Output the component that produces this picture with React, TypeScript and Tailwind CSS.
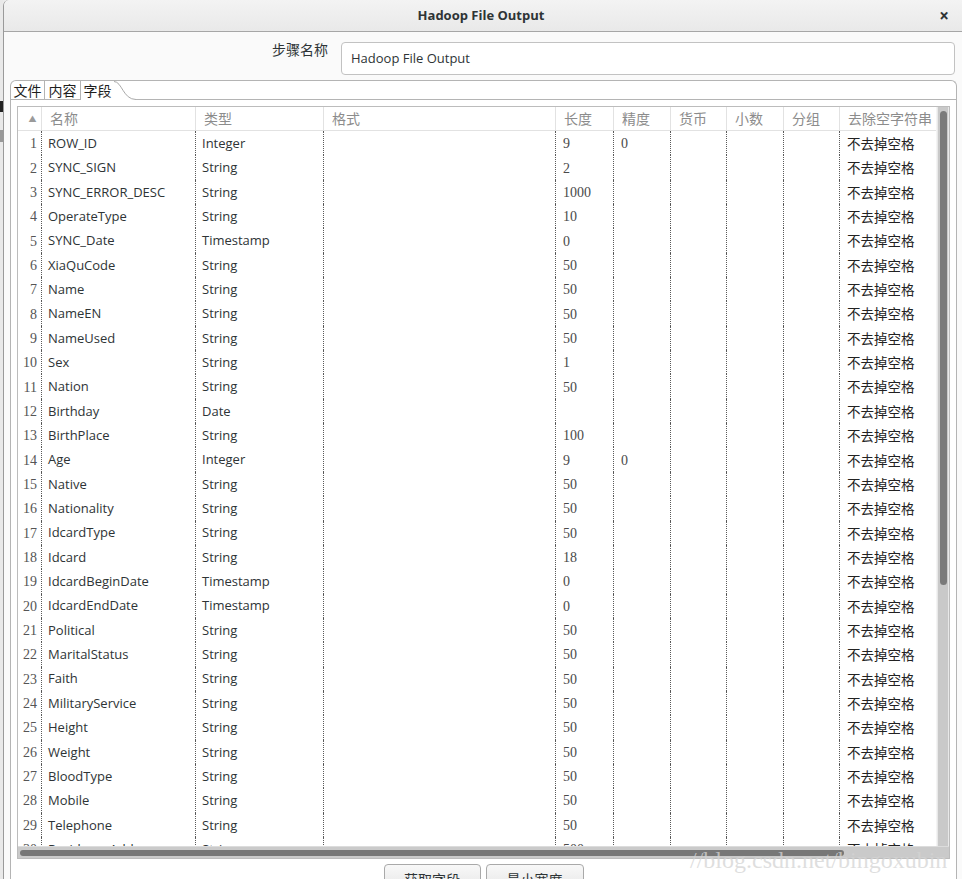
import React from "react";

const cols = [
  { w: "w-[24px]", label: "" },
  { w: "w-[154px]", label: "名称" },
  { w: "w-[128px]", label: "类型" },
  { w: "w-[232px]", label: "格式" },
  { w: "w-[58px]", label: "长度" },
  { w: "w-[57px]", label: "精度" },
  { w: "w-[56px]", label: "货币" },
  { w: "w-[57px]", label: "小数" },
  { w: "w-[56px]", label: "分组" },
  { w: "w-[96px]", label: "去除空字符串" },
];

const rows: [string, string, string, string][] = [
  ["ROW_ID", "Integer", "9", "0"],
  ["SYNC_SIGN", "String", "2", ""],
  ["SYNC_ERROR_DESC", "String", "1000", ""],
  ["OperateType", "String", "10", ""],
  ["SYNC_Date", "Timestamp", "0", ""],
  ["XiaQuCode", "String", "50", ""],
  ["Name", "String", "50", ""],
  ["NameEN", "String", "50", ""],
  ["NameUsed", "String", "50", ""],
  ["Sex", "String", "1", ""],
  ["Nation", "String", "50", ""],
  ["Birthday", "Date", "", ""],
  ["BirthPlace", "String", "100", ""],
  ["Age", "Integer", "9", "0"],
  ["Native", "String", "50", ""],
  ["Nationality", "String", "50", ""],
  ["IdcardType", "String", "50", ""],
  ["Idcard", "String", "18", ""],
  ["IdcardBeginDate", "Timestamp", "0", ""],
  ["IdcardEndDate", "Timestamp", "0", ""],
  ["Political", "String", "50", ""],
  ["MaritalStatus", "String", "50", ""],
  ["Faith", "String", "50", ""],
  ["MilitaryService", "String", "50", ""],
  ["Height", "String", "50", ""],
  ["Weight", "String", "50", ""],
  ["BloodType", "String", "50", ""],
  ["Mobile", "String", "50", ""],
  ["Telephone", "String", "50", ""],
  ["ResidenceAddr", "String", "500", ""],
];

const sans = "font-['Open_Sans','Noto_Sans_CJK_SC',sans-serif]";
const cjk = "font-['Noto_Sans_CJK_SC',sans-serif]";
const serif = "font-['Liberation_Serif',serif]";
const dot = "border-r border-dotted border-[#5a5a5a]";

function FieldRow({ i, r }: { i: number; r: [string, string, string, string] }) {
  return (
    <div className="flex h-[24.35px] shrink-0 items-center text-[13px]">
      <div className={`w-[24px] h-full flex items-center justify-end pr-[4px] pt-[1px] ${dot} ${serif} text-[14px] text-[#555]`}>
        {i + 1}
      </div>
      <div className={`w-[154px] h-full flex items-center pl-[6px] pt-[1px] ${dot} ${sans} text-[#2e3436]`}>{r[0]}</div>
      <div className={`w-[128px] h-full flex items-center pl-[6px] pt-[1px] ${dot} ${sans} text-[#2e3436]`}>{r[1]}</div>
      <div className={`w-[232px] h-full ${dot}`}></div>
      <div className={`w-[58px] h-full flex items-center pl-[7px] pt-[1px] ${dot} ${serif} text-[14px] text-[#4a4a4a]`}>{r[2]}</div>
      <div className={`w-[57px] h-full flex items-center pl-[7px] pt-[1px] ${dot} ${serif} text-[14px] text-[#4a4a4a]`}>{r[3]}</div>
      <div className={`w-[56px] h-full ${dot}`}></div>
      <div className={`w-[57px] h-full ${dot}`}></div>
      <div className={`w-[56px] h-full ${dot}`}></div>
      <div className={`w-[96px] h-full flex items-center pl-[7px] ${cjk} text-[13.5px] text-[#222] whitespace-nowrap overflow-hidden`}>
        不去掉空格
      </div>
    </div>
  );
}

export default function App() {
  return (
    <div className={`relative w-[962px] h-[879px] overflow-hidden flex bg-[#ececec] ${sans}`}>
      <div className="w-[3px] shrink-0 flex flex-col bg-[#e9e9e9]">
        <div className="mt-[101px] h-[11px] bg-[#222]"></div>
        <div className="mt-[18px] h-[12px] bg-[#999]"></div>
      </div>

      <div className="flex-1 flex flex-col border-l border-[#9a9a9a] rounded-tl-[6px] bg-[#fafafa]">
        {/* title bar */}
        <div className="h-[32px] shrink-0 flex items-center bg-gradient-to-b from-[#f3f3f3] to-[#e9e9e9] border-b border-[#a6a6a6] rounded-tl-[6px]">
          <div className="flex-1 pl-[32px] text-center text-[13px] font-bold text-[#2e3436]">Hadoop File Output</div>
          <div className="w-[36px] pr-[13px] text-right text-[17px] leading-[17px] font-bold text-[#2e3436]">×</div>
        </div>

        {/* step name */}
        <div className="h-[48px] shrink-0 flex items-start pt-[10px]">
          <div className={`w-[324px] text-right text-[14px] leading-[14px] text-[#2e3436] ${cjk}`}>步骤名称</div>
          <div className="ml-[13px] w-[614px] h-[33px] flex items-center pl-[9px] bg-white border border-[#c2c2c2] rounded-[4px] text-[13px] text-[#2e3436]">
            Hadoop File Output
          </div>
        </div>

        {/* tab folder */}
        <div className="ml-[6px] w-[947px] flex-1 flex flex-col bg-white border border-[#b4b4b4] border-b-0 rounded-t-[6px]">
          <div className={`h-[19px] shrink-0 flex items-stretch ${cjk} text-[14px] leading-[17px] text-[#1e1e1e]`}>
            <div className="w-[34px] flex items-center justify-center border-r border-b border-[#b4b4b4]">文件</div>
            <div className="w-[36px] flex items-center justify-center border-r border-b border-[#b4b4b4]">内容</div>
            <div className="w-[33px] flex items-center justify-center">字段</div>
            <svg width="22" height="19" viewBox="0 0 22 19" className="shrink-0">
              <path d="M0 0.5 C8 0.5 9 18.5 22 18.5" fill="none" stroke="#a8a8a8" strokeWidth="1" />
            </svg>
            <div className="flex-1 border-b border-[#b4b4b4]"></div>
          </div>

          <div className="pt-[6px] px-[6px] flex flex-col">
            {/* table */}
            <div className="w-[933px] flex flex-col bg-white border border-[#bcbcbc]">
              <div className="flex">
                <div className="w-[918px] flex flex-col">
                  <div className={`h-[24px] flex border-b border-[#e2e2e2] ${cjk} text-[14px] text-[#8c8c8c]`}>
                    {cols.map((c, idx) => (
                      <div
                        key={idx}
                        className={`${c.w} h-full flex items-center whitespace-nowrap overflow-hidden ${
                          idx === 0
                            ? "justify-center border-r border-[#e2e2e2] text-[8px] text-[#9a9a9a] pl-[6px]"
                            : idx === 9
                            ? "pl-[8px]"
                            : "pl-[8px] border-r border-[#e2e2e2]"
                        }`}
                      >
                        {idx === 0 ? "▲" : c.label}
                      </div>
                    ))}
                  </div>
                  <div className="h-[715px] flex flex-col overflow-hidden">
                    {rows.map((r, i) => (
                      <FieldRow key={i} i={i} r={r} />
                    ))}
                  </div>
                </div>
                {/* vertical scrollbar */}
                <div className="w-[13px] flex justify-center bg-[#e8e8e8] border-l border-[#f4f4f4]">
                  <div className="w-[10px] flex flex-col items-center bg-[#c9c9c9]">
                    <div className="mt-[4px] w-[7px] h-[474px] rounded-full bg-[#7a7a7a]"></div>
                  </div>
                </div>
              </div>
              {/* horizontal scrollbar */}
              <div className="h-[12px] flex items-center bg-[#cacaca] border-t border-[#dcdcdc]">
                <div className="ml-[2px] w-[824px] h-[6px] rounded-full bg-[#777]"></div>
              </div>
            </div>

            {/* buttons */}
            <div className="mt-[5px] flex justify-center gap-[5px]">
              <div className={`w-[97px] h-[30px] flex items-center justify-center border border-[#a9a9a9] rounded-[4px] bg-gradient-to-b from-[#f8f8f8] to-[#e4e4e4] text-[14px] text-[#2e3436] ${cjk}`}>
                获取字段
              </div>
              <div className={`w-[98px] h-[30px] flex items-center justify-center border border-[#a9a9a9] rounded-[4px] bg-gradient-to-b from-[#f8f8f8] to-[#e4e4e4] text-[14px] text-[#2e3436] ${cjk}`}>
                最小宽度
              </div>
            </div>
          </div>
        </div>
      </div>

      {/* watermark */}
      <div className={`absolute left-[690px] top-[842px] text-[24px] text-[#d4d4d4]/75 whitespace-nowrap ${serif}`}>
        //blog.csdn.net/bingoxubin
      </div>
    </div>
  );
}
